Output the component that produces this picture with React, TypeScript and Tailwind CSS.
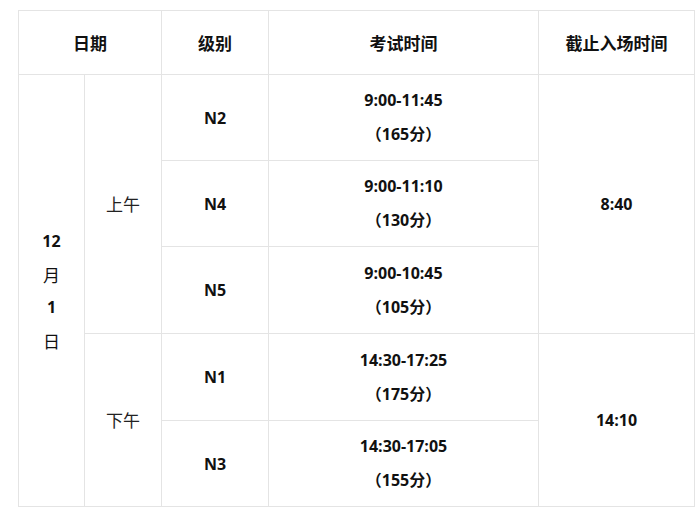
const cjk = "font-['Noto_Sans_CJK_SC',sans-serif]";
const num = "font-['Open_Sans','Noto_Sans_CJK_SC',sans-serif]";

const cell = 'border border-[#e4e4e4] p-0 text-center align-middle';

function Times({ range, mins }: { range: string; mins: string }) {
  return (
    <div className="flex flex-col items-center leading-[33px]">
      <span className={`${num} text-[16px] font-bold`}>{range}</span>
      <span className="font-bold">
        <span className={`${cjk} text-[16px]`}>（</span>
        <span className={`${num} text-[16px]`}>{mins}</span>
        <span className={`${cjk} text-[16px]`}>分）</span>
      </span>
    </div>
  );
}

const rows = [
  { level: 'N2', range: '9:00-11:45', mins: '165' },
  { level: 'N4', range: '9:00-11:10', mins: '130' },
  { level: 'N5', range: '9:00-10:45', mins: '105' },
  { level: 'N1', range: '14:30-17:25', mins: '175' },
  { level: 'N3', range: '14:30-17:05', mins: '155' },
];

export default function App() {
  const heights = ['h-[86px]', 'h-[86px]', 'h-[87px]', 'h-[87px]', 'h-[86px]'];
  return (
    <div className="min-h-[513px] w-[700px] bg-white pl-[18px] pt-[10px] text-[#111]">
      <table className="w-[676px] table-fixed border-collapse">
        <colgroup>
          <col className="w-[66px]" />
          <col className="w-[77px]" />
          <col className="w-[107px]" />
          <col className="w-[270px]" />
          <col className="w-[156px]" />
        </colgroup>
        <thead>
          <tr className="h-[64px]">
            <th colSpan={2} className={`${cell} ${cjk} text-[17px] font-bold`}>日期</th>
            <th className={`${cell} ${cjk} text-[17px] font-bold`}>级别</th>
            <th className={`${cell} ${cjk} text-[17px] font-bold`}>考试时间</th>
            <th className={`${cell} ${cjk} text-[17px] font-bold`}>截止入场时间</th>
          </tr>
        </thead>
        <tbody>
          {rows.map((r, i) => (
            <tr key={r.level} className={heights[i]}>
              {i === 0 && (
                <td rowSpan={5} className={cell}>
                  <div className="flex flex-col items-center font-bold leading-[33px]">
                    <span className={`${num} text-[16px]`}>12</span>
                    <span className={`${cjk} text-[17px] font-normal`}>月</span>
                    <span className={`${num} text-[16px]`}>1</span>
                    <span className={`${cjk} text-[17px] font-normal`}>日</span>
                  </div>
                </td>
              )}
              {i === 0 && (
                <td rowSpan={3} className={`${cell} ${cjk} text-[17px] text-[#222]`}>上午</td>
              )}
              {i === 3 && (
                <td rowSpan={2} className={`${cell} ${cjk} text-[17px] text-[#222]`}>下午</td>
              )}
              <td className={`${cell} ${num} text-[16px] font-bold`}>{r.level}</td>
              <td className={cell}>
                <Times range={r.range} mins={r.mins} />
              </td>
              {i === 0 && (
                <td rowSpan={3} className={`${cell} ${num} text-[16px] font-bold`}>8:40</td>
              )}
              {i === 3 && (
                <td rowSpan={2} className={`${cell} ${num} text-[16px] font-bold`}>14:10</td>
              )}
            </tr>
          ))}
        </tbody>
      </table>
    </div>
  );
}
